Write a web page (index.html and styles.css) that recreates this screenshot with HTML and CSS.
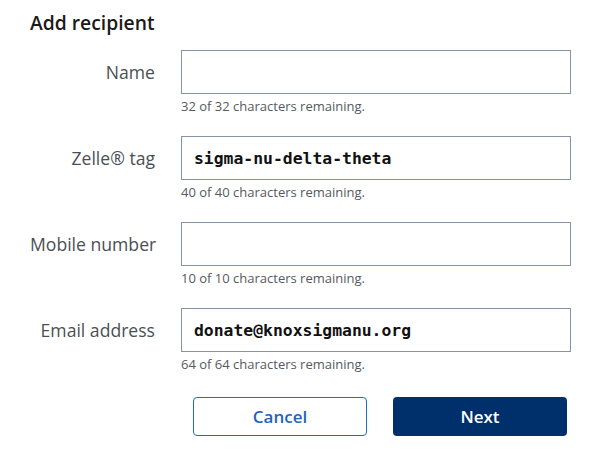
FILE: index.html
```html
<!DOCTYPE html>
<html lang="en">
<head>
    <meta charset="UTF-8">
    <meta name="viewport" content="width=device-width, initial-scale=1.0">
    <title>Add recipient</title>
    <link rel="stylesheet" href="styles.css">
</head>
<body>
    <div class="container">
        <h1>Add recipient</h1>
        <div class="field">
            <label for="name">Name</label>
            <input type="text" id="name" maxlength="32">
            <div class="hint">32 of 32 characters remaining.</div>
        </div>
        <div class="field">
            <label for="tag">Zelle® tag</label>
            <input type="text" id="tag" maxlength="40" value="sigma-nu-delta-theta">
            <div class="hint">40 of 40 characters remaining.</div>
        </div>
        <div class="field">
            <label for="mobile">Mobile number</label>
            <input type="text" id="mobile" maxlength="10">
            <div class="hint">10 of 10 characters remaining.</div>
        </div>
        <div class="field">
            <label for="email">Email address</label>
            <input type="text" id="email" maxlength="64" value="donate@knoxsigmanu.org">
            <div class="hint">64 of 64 characters remaining.</div>
        </div>
        <div class="actions">
            <button class="cancel-button">Cancel</button>
            <button class="next-button">Next</button>
        </div>
    </div>
</body>
</html>
```

FILE: styles.css
```css
body {
    font-family: "Open Sans", Arial, sans-serif;
    margin: 0;
    background-color: white;
    color: #222;
}
.container {
    padding: 10px 0 0 30px;
    width: 541px;
}
h1 {
    font-size: 19.3px;
    font-weight: 600;
    margin: 0 0 14px 0;
    line-height: 26px;
    color: #1a1a1a;
}
.field {
    display: grid;
    grid-template-columns: 125px 390px;
    column-gap: 26px;
    margin-bottom: 21px;
}
label {
    align-self: center;
    text-align: right;
    font-size: 17.6px;
    color: #4b4f54;
    white-space: nowrap;
}
input {
    height: 44px;
    box-sizing: border-box;
    border: 1px solid #8594a6;
    border-radius: 0;
    padding: 0 12px;
    font-family: "DejaVu Sans Mono", monospace;
    font-weight: bold;
    font-size: 16.4px;
    color: #111;
    outline: none;
}
.hint {
    grid-column: 2;
    margin-top: 4px;
    font-size: 13px;
    line-height: 17px;
    color: #555a60;
}
.actions {
    display: flex;
    gap: 26px;
    margin: 24px 0 0 163px;
}
button {
    width: 174px;
    height: 39px;
    border-radius: 4px;
    font-family: "Open Sans", Arial, sans-serif;
    font-size: 17px;
    font-weight: 600;
    cursor: pointer;
}
.cancel-button {
    background-color: white;
    border: 1px solid #1f6bcb;
    color: #1f64bd;
}
.next-button {
    background-color: #00306b;
    border: none;
    color: white;
}
```
